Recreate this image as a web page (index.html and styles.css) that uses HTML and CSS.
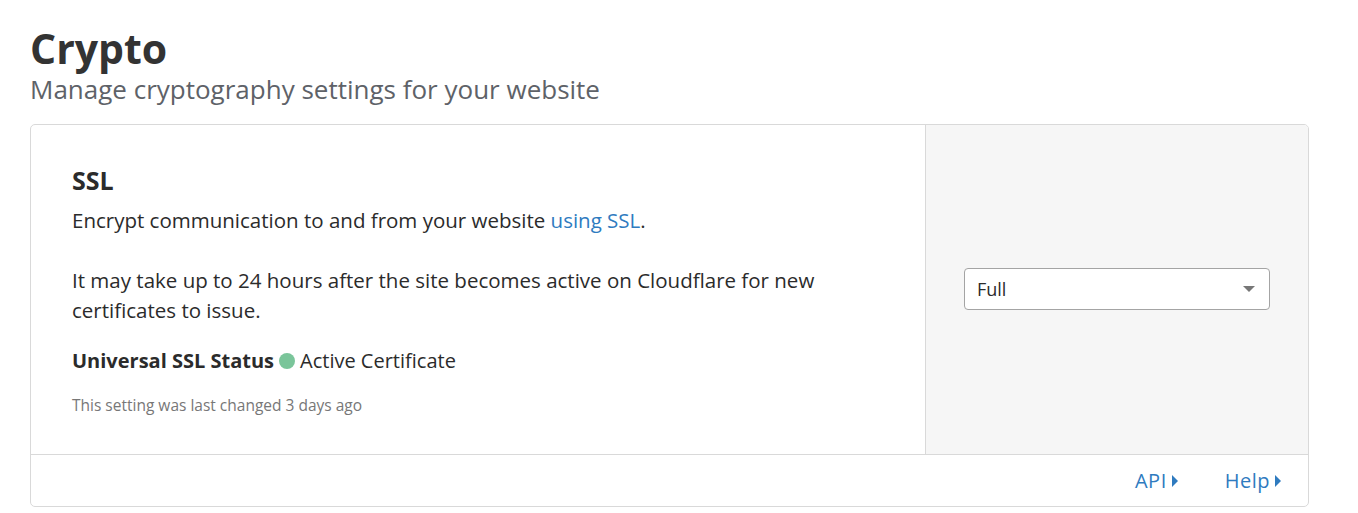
FILE: index.html
```html
<!DOCTYPE html>
<html>
<head>
<meta charset="utf-8">
<link rel="stylesheet" href="styles.css">
</head>
<body>
<div class="page">
  <header class="page-header">
    <h1 class="title">Crypto</h1>
    <p class="subtitle">Manage cryptography settings for your website</p>
  </header>
  <section class="card">
    <div class="card-body">
      <div class="card-main">
        <h2 class="card-title">SSL</h2>
        <p class="text">Encrypt communication to and from your website <a class="link" href="#">using SSL</a>.</p>
        <p class="text gap">It may take up to 24 hours after the site becomes active on Cloudflare for new certificates to issue.</p>
        <p class="status"><strong>Universal SSL Status</strong> <span class="dot"></span> Active Certificate</p>
        <p class="note">This setting was last changed 3 days ago</p>
      </div>
      <div class="card-side">
        <div class="select">
          <span class="select-value">Full</span>
          <span class="caret"></span>
        </div>
      </div>
    </div>
    <footer class="card-footer">
      <a class="foot-link" href="#">API<span class="tri"></span></a>
      <a class="foot-link" href="#">Help<span class="tri"></span></a>
    </footer>
  </section>
</div>
</body>
</html>
```

FILE: styles.css
```css
* { box-sizing: border-box; }
body {
  margin: 0;
  background: #fff;
  font-family: "Open Sans", "Noto Sans", sans-serif;
  color: #2b2b2b;
}
.page {
  padding: 22px 49px 0 30px;
}
.title {
  margin: 0;
  font-size: 41px;
  font-weight: 700;
  line-height: 52px;
  color: #333;
}
.subtitle {
  margin: 0;
  font-size: 26px;
  line-height: 30px;
  color: #5e6268;
}
.card {
  margin-top: 20px;
  border: 1px solid #d9d9d9;
  border-radius: 5px;
  overflow: hidden;
}
.card-body {
  display: flex;
  border-bottom: 1px solid #d9d9d9;
  height: 330px;
}
.card-main {
  flex: 0 0 894px;
  padding: 38px 41px 0 41px;
}
.card-side {
  flex: 1;
  background: #f6f6f6;
  border-left: 1px solid #d9d9d9;
  display: flex;
  align-items: center;
  padding: 0 38px;
}
.card-title {
  margin: 0;
  font-size: 25px;
  line-height: 34px;
  font-weight: 700;
}
.text {
  margin: 8px 0 0;
  font-size: 20.5px;
  line-height: 30px;
  max-width: 780px;
}
.text.gap { margin-top: 30px; }
.link { color: #2f7bbf; text-decoration: none; }
.status {
  margin: 21px 0 0;
  font-size: 20px;
  line-height: 30px;
  display: flex;
  align-items: center;
  gap: 5px;
}
.dot {
  width: 16px; height: 16px;
  border-radius: 50%;
  background: #7ac59a;
  display: inline-block;
}
.note {
  margin: 19px 0 0;
  font-size: 15.5px;
  line-height: 20px;
  color: #777;
}
.select {
  flex: 1;
  height: 42px;
  margin-top: -2px;
  background: #fff;
  border: 1px solid #a4a4a4;
  border-radius: 4px;
  display: flex;
  align-items: center;
  justify-content: space-between;
  padding: 0 14px 0 12px;
  font-size: 18px;
}
.caret {
  width: 0; height: 0;
  border-left: 6px solid transparent;
  border-right: 6px solid transparent;
  border-top: 6px solid #777;
}
.card-footer {
  height: 51px;
  display: flex;
  justify-content: flex-end;
  align-items: center;
  gap: 47px;
  padding-right: 27px;
}
.foot-link {
  color: #2f7bbf;
  text-decoration: none;
  font-size: 20px;
  letter-spacing: 0.5px;
  display: flex;
  align-items: center;
  gap: 5px;
}
.tri {
  width: 0; height: 0;
  border-top: 6px solid transparent;
  border-bottom: 6px solid transparent;
  border-left: 6px solid #2f7bbf;
}
```
